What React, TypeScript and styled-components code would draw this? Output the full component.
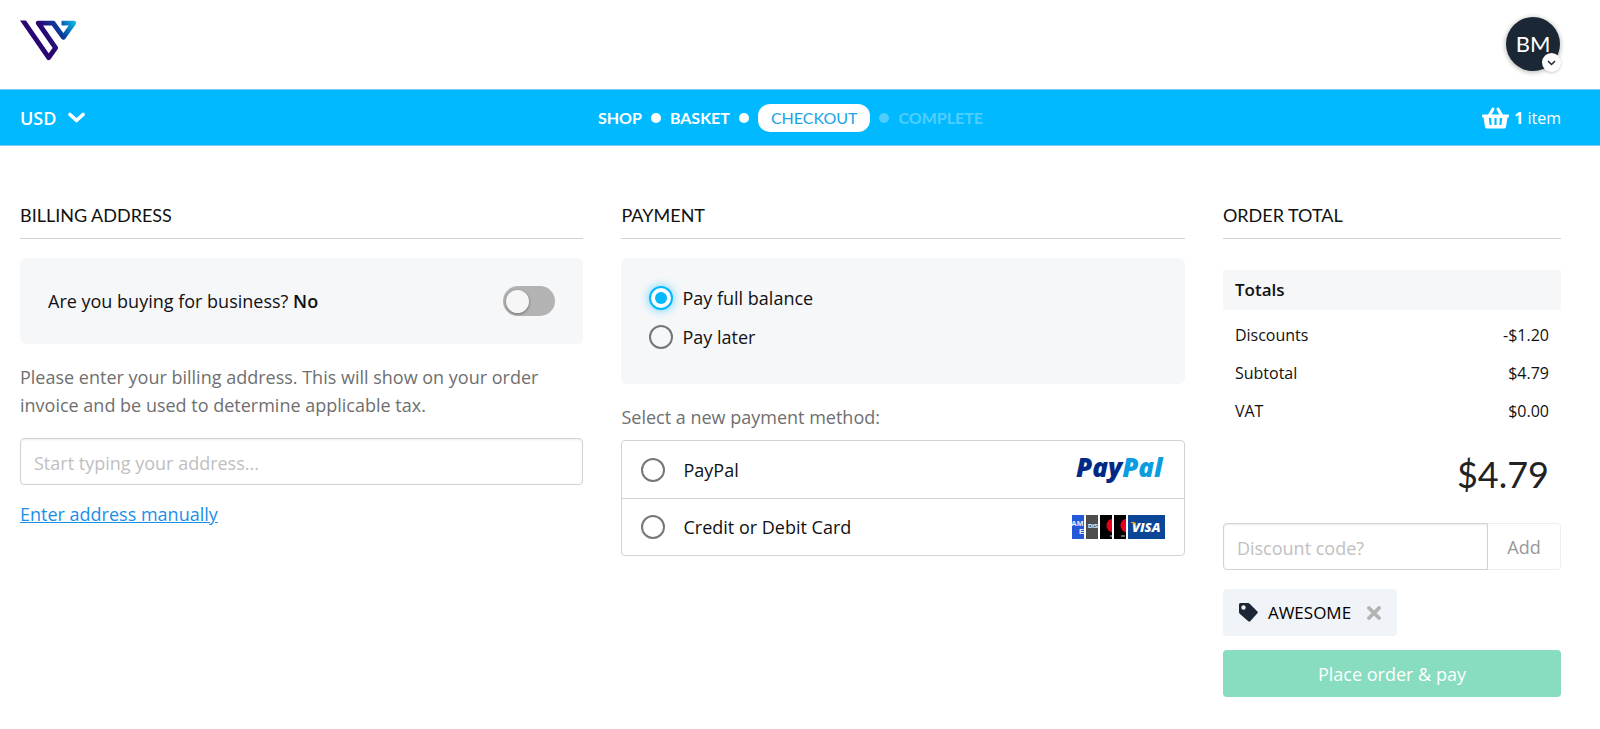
import React, { useState } from "react";
import styled, { createGlobalStyle } from "styled-components";

const display = '"Lato", "Open Sans", sans-serif';
const body = '"Open Sans", "Noto Sans", sans-serif';

const GlobalStyle = createGlobalStyle`
  *, *::before, *::after { box-sizing: border-box; }
  body { margin: 0; background: #fff; color: #111; font-family: ${body}; font-size: 18px; line-height: 28px; }
  button, input, select { font: inherit; color: inherit; margin: 0; }
`;

const Header = styled.header`
  display: flex;
  justify-content: space-between;
  align-items: flex-start;
  height: 89px;
  padding: 17px 40px 0 20px;
`;

const LogoLink = styled.a`
  display: block;
  padding-top: 2px;
  svg { display: block; }
`;

const Avatar = styled.button`
  position: relative;
  width: 54px;
  height: 54px;
  padding: 0;
  border: 0;
  border-radius: 50%;
  background: #1b2735;
  box-shadow: 0 1px 4px 1px rgba(0, 0, 0, 0.25);
  color: #fff;
  font-family: ${display};
  font-size: 22px;
  line-height: 54px;
`;

const AvatarBadge = styled.span`
  position: absolute;
  right: -1px;
  bottom: -1px;
  display: flex;
  align-items: center;
  justify-content: center;
  width: 19px;
  height: 19px;
  border-radius: 50%;
  background: #fff;
  box-shadow: 0 1px 3px rgba(0, 0, 0, 0.2);
`;

const Bar = styled.div`
  display: grid;
  grid-template-columns: 1fr auto 1fr;
  align-items: center;
  height: 57px;
  padding: 0 39px 0 20px;
  background: #00b9ff;
  border-top: 1px solid #7dcaf5;
  border-bottom: 1px solid #7dcaf5;
  color: #fff;
`;

const Currency = styled.label`
  display: flex;
  align-items: center;
  gap: 11px;
  select {
    appearance: none;
    padding: 0;
    border: 0;
    background: transparent;
    font-size: 18px;
    font-weight: 600;
    line-height: 28px;
  }
`;

const Steps = styled.ol`
  display: flex;
  align-items: center;
  margin: 0;
  padding: 0;
  list-style: none;
  font-family: ${display};
  font-size: 16px;
  font-weight: 700;
`;

const Step = styled.li<{ $muted?: boolean }>`
  display: flex;
  align-items: center;
  opacity: ${(p) => (p.$muted ? 0.3 : 1)};
  li + &::before {
    content: "";
    width: 10px;
    height: 10px;
    margin: 0 9px;
    border-radius: 50%;
    background: #fff;
  }
  a { color: inherit; text-decoration: none; }
`;

const CurrentStep = styled.span`
  padding: 0 13px;
  border-radius: 12px;
  background: #fff;
  color: #16a5e6;
  font-weight: 400;
`;

const Basket = styled.a`
  justify-self: end;
  display: flex;
  align-items: center;
  gap: 5px;
  color: #fff;
  font-size: 16px;
  font-weight: 500;
  text-decoration: none;
  b { font-weight: 700; }
`;

const Page = styled.main`
  display: grid;
  grid-template-columns: 5fr 5fr 3fr;
  column-gap: 38px;
  align-items: start;
  padding: 55px 39px 30px 20px;
`;

const Column = styled.section`
  display: flex;
  flex-direction: column;
  min-width: 0;
`;

const Heading = styled.h2`
  margin: 0 0 19px;
  padding-bottom: 9px;
  border-bottom: 1px solid #d3d3d3;
  font-family: ${display};
  font-size: 18px;
  font-weight: 400;
  line-height: 28px;
`;

const Panel = styled.div`
  padding: 28px;
  border-radius: 6px;
  background: #f6f7f9;
`;

const BusinessPanel = styled(Panel).attrs({ as: "label" })`
  display: flex;
  align-items: center;
  justify-content: space-between;
  height: 86px;
  b { font-weight: 600; }
`;

const Toggle = styled.input`
  appearance: none;
  display: flex;
  align-items: center;
  width: 52px;
  height: 30px;
  padding: 0 3px;
  border-radius: 15px;
  background: #b3b3b3;
  &::before {
    content: "";
    width: 23px;
    height: 23px;
    border-radius: 50%;
    background: #f6f6f6;
    box-shadow: 0 1px 3px rgba(0, 0, 0, 0.4);
  }
  &:checked { justify-content: flex-end; background: #00b9ff; }
`;

const Note = styled.p`
  margin: 19px 0 19px;
  color: #6f6f6f;
`;

const TextInput = styled.input`
  width: 100%;
  min-width: 0;
  height: 47px;
  padding: 2px 13px 0;
  border: 1px solid #d3d3d3;
  border-radius: 4px;
  background: #fff;
  box-shadow: inset 0 1px 2px rgba(0, 0, 0, 0.08);
  &::placeholder { color: #c0c0c0; opacity: 1; }
`;

const ManualLink = styled.a`
  align-self: flex-start;
  margin-top: 15px;
  color: #1a8fe8;
`;

const Radio = styled.input.attrs({ type: "radio" })`
  appearance: none;
  flex: none;
  display: grid;
  place-items: center;
  width: 24px;
  height: 24px;
  border: 2px solid #777;
  border-radius: 50%;
  background: transparent;
  &:checked {
    border-color: #00b9ff;
    background: #fff;
    box-shadow: 0 0 8px 1px #7fd8ff;
  }
  &:checked::before {
    content: "";
    width: 12px;
    height: 12px;
    border-radius: 50%;
    background: #00b9ff;
  }
`;

const BalanceOptions = styled(Panel)`
  display: flex;
  flex-direction: column;
  gap: 11px;
  height: 126px;
  padding-top: 26px;
`;

const BalanceOption = styled.label`
  display: flex;
  align-items: center;
  gap: 9px;
`;

const MethodNote = styled(Note)`
  margin-bottom: 9px;
`;

const Methods = styled.div`
  border: 1px solid #d3d3d3;
  border-radius: 4px;
`;

const Method = styled.label`
  display: flex;
  align-items: center;
  height: 57px;
  padding: 0 19px;
  & + & { border-top: 1px solid #d3d3d3; }
  svg { display: block; margin-left: auto; }
`;

const MethodName = styled.span`
  margin-left: 18px;
`;

const Totals = styled.table`
  width: 100%;
  margin-top: 12px;
  border-collapse: collapse;
  font-size: 16px;
  th, td { padding: 0 12px; font-weight: 400; text-align: left; height: 38px; }
  td { text-align: right; }
  thead th { height: 40px; background: #f6f7f9; font-size: 17px; font-weight: 600; }
  tbody tr:first-child > * { height: 44px; padding-top: 6px; }
`;

const GrandTotal = styled.p`
  margin: 22px 12px 27px 0;
  color: #222;
  font-family: ${display};
  font-size: 36px;
  line-height: 44px;
  text-align: right;
`;

const DiscountForm = styled.form`
  display: flex;
  ${TextInput} { flex: 1; border-radius: 4px 0 0 4px; }
`;

const AddButton = styled.button`
  width: 73px;
  height: 47px;
  padding: 0;
  border: 1px solid #eee;
  border-left: 0;
  border-radius: 0 4px 4px 0;
  background: #fff;
  color: #999;
`;

const Coupon = styled.div`
  display: flex;
  align-items: center;
  align-self: flex-start;
  gap: 10px;
  height: 47px;
  margin: 19px 0 14px;
  padding: 0 16px;
  border-radius: 4px;
  background: #f0f3f8;
  font-size: 17px;
  color: #000;
`;

const RemoveButton = styled.button`
  display: block;
  margin-left: 6px;
  padding: 0;
  border: 0;
  background: none;
  svg { display: block; }
`;

const OrderButton = styled.button`
  height: 47px;
  border: 0;
  border-radius: 4px;
  background: #88dcc0;
  color: #fff;
`;

const Logo = () => (
  <svg width="58" height="44" viewBox="0 0 58 44" fill="none" aria-hidden="true">
    <defs>
      <linearGradient id="brand" x1="8" y1="30" x2="56" y2="3" gradientUnits="userSpaceOnUse">
        <stop offset="0.4" stopColor="#2a0673" />
        <stop offset="0.68" stopColor="#093f9c" />
        <stop offset="1" stopColor="#0abfed" />
      </linearGradient>
      <clipPath id="brand-top"><rect y="1.600" width="58" height="42" /></clipPath>
    </defs>
    <path
      clipPath="url(#brand-top)"
      d="M1.600 -0.500 L28.700 38.600 L35.600 28.800 L18.300 4 H33 L43.400 18.200 L53.600 4 H41.500"
      stroke="url(#brand)"
      strokeWidth="4.900"
      strokeLinejoin="round"
    />
  </svg>
);

const Chevron = () => (
  <svg width="17" height="11" viewBox="0 0 17 11" fill="none" aria-hidden="true">
    <path d="M2 2.500 L8.500 8.500 L15 2.500" stroke="currentColor" strokeWidth="3.600" strokeLinecap="round" strokeLinejoin="round" />
  </svg>
);

const BasketIcon = () => (
  <svg width="27" height="22" viewBox="0 0 27 22" aria-hidden="true">
    <path d="M7 9 L11 2 M20 9 L16 2" stroke="#fff" strokeWidth="3" strokeLinecap="round" />
    <path
      fill="#fff"
      fillRule="evenodd"
      d="M1 7.500 H26 Q27 7.500 27 8.500 V9.500 Q27 10.500 26 10.500 H25.500 L24 20 Q23.600 21.500 22 21.500 H5 Q3.400 21.500 3 20 L1.500 10.500 H1 Q0 10.500 0 9.500 V8.500 Q0 7.500 1 7.500 Z M6.800 11 L7.600 18 H9.600 L9.200 11 Z M12.400 11 V18 H14.600 V11 Z M17.800 11 L17.400 18 H19.400 L20.200 11 Z"
    />
  </svg>
);

const PayPalLogo = () => (
  <svg width="94" height="42" viewBox="0 0 94 42" role="img" aria-label="PayPal">
    <text x="5" y="28" fontFamily="Open Sans" fontSize="26" fontWeight="800" fontStyle="italic" fill="#012a86">
      Pay<tspan fill="#0a9de0">Pal</tspan>
    </text>
  </svg>
);

const CardLogos = () => (
  <svg width="93" height="24" viewBox="0 0 93 24" role="img" aria-label="American Express, Discover, Mastercard, Maestro and Visa">
    <defs>
      <clipPath id="amex"><rect width="12" height="24" /></clipPath>
      <clipPath id="discover"><rect x="14" width="12" height="24" /></clipPath>
      <clipPath id="mastercard"><rect x="28" width="12" height="24" /></clipPath>
      <clipPath id="maestro"><rect x="42" width="12" height="24" /></clipPath>
    </defs>
    <g clipPath="url(#amex)" fontFamily="Liberation Sans" fontWeight="700" fontSize="8" fill="#e8f0ff">
      <rect width="12" height="24" fill="#2358d8" />
      <text x="-1" y="11">AM</text>
      <text x="7" y="19">E</text>
    </g>
    <g clipPath="url(#discover)">
      <rect x="14" width="12" height="24" fill="#4d4d4d" />
      <text x="16" y="13" fontFamily="Liberation Sans" fontWeight="700" fontSize="6" fill="#fff">DIS</text>
    </g>
    <g clipPath="url(#mastercard)">
      <rect x="28" width="12" height="24" fill="#000" />
      <circle cx="41.500" cy="10.500" r="7" fill="#eb001b" />
      <path d="M38 21h2" stroke="#ccc" />
    </g>
    <g clipPath="url(#maestro)">
      <rect x="42" width="12" height="24" fill="#000" />
      <circle cx="55.500" cy="10.500" r="7" fill="#eb001b" />
      <path d="M49 21h4" stroke="#ccc" />
    </g>
    <rect x="56" width="37" height="24" fill="#0b4595" />
    <text x="60" y="17" fontFamily="Open Sans" fontWeight="800" fontStyle="italic" fontSize="13" fill="#fff">VISA</text>
    <path d="M58.500 7 H62 Q63.500 7 63.700 8.500 L64.500 12 Q62.500 8.500 58.500 7.300 Z" fill="#f6a51b" />
  </svg>
);

const TagIcon = () => (
  <svg width="19" height="19" viewBox="0 0 19 19" aria-hidden="true">
    <path
      fill="#1b2735"
      fillRule="evenodd"
      d="M1.500 0 H9 Q10 0 10.700 0.700 L18.400 8.400 Q19.300 9.300 18.400 10.200 L11.200 18.200 Q10.200 19 9.300 18.200 L0.700 10.700 Q0 10 0 9 V1.500 Q0 0 1.500 0 Z M4.500 2.300 A2.200 2.200 0 1 0 4.500 6.700 A2.200 2.200 0 1 0 4.500 2.300 Z"
    />
  </svg>
);

const totals = [
  ["Discounts", "-$1.20"],
  ["Subtotal", "$4.79"],
  ["VAT", "$0.00"],
];

export default function App() {
  const [business, setBusiness] = useState(false);

  return (
    <>
      <GlobalStyle />
      <Header>
        <LogoLink href="#" aria-label="Home"><Logo /></LogoLink>
        <Avatar type="button">
          BM
          <AvatarBadge>
            <svg width="9" height="6" viewBox="0 0 9 6" fill="none" aria-hidden="true">
              <path d="M1 1 L4.500 4.500 L8 1" stroke="#1b2735" strokeWidth="1.500" />
            </svg>
          </AvatarBadge>
        </Avatar>
      </Header>
      <Bar>
        <Currency>
          <select aria-label="Currency" defaultValue="USD">
            <option>USD</option>
          </select>
          <Chevron />
        </Currency>
        <Steps>
          <Step><a href="#">SHOP</a></Step>
          <Step><a href="#">BASKET</a></Step>
          <Step><CurrentStep aria-current="step">CHECKOUT</CurrentStep></Step>
          <Step $muted>COMPLETE</Step>
        </Steps>
        <Basket href="#"><BasketIcon /><span><b>1</b> item</span></Basket>
      </Bar>
      <Page>
        <Column>
          <Heading>BILLING ADDRESS</Heading>
          <BusinessPanel>
            <span>Are you buying for business? <b>{business ? "Yes" : "No"}</b></span>
            <Toggle type="checkbox" role="switch" checked={business} onChange={(e) => setBusiness(e.target.checked)} />
          </BusinessPanel>
          <Note>
            Please enter your billing address. This will show on your order
            <br />
            invoice and be used to determine applicable tax.
          </Note>
          <TextInput type="text" aria-label="Billing address" placeholder="Start typing your address..." />
          <ManualLink href="#">Enter address manually</ManualLink>
        </Column>
        <Column>
          <Heading>PAYMENT</Heading>
          <BalanceOptions>
            <BalanceOption><Radio name="balance" defaultChecked />Pay full balance</BalanceOption>
            <BalanceOption><Radio name="balance" />Pay later</BalanceOption>
          </BalanceOptions>
          <MethodNote>Select a new payment method:</MethodNote>
          <Methods>
            <Method><Radio name="method" /><MethodName>PayPal</MethodName><PayPalLogo /></Method>
            <Method><Radio name="method" /><MethodName>Credit or Debit Card</MethodName><CardLogos /></Method>
          </Methods>
        </Column>
        <Column>
          <Heading>ORDER TOTAL</Heading>
          <Totals>
            <thead><tr><th colSpan={2}>Totals</th></tr></thead>
            <tbody>
              {totals.map(([name, value]) => (
                <tr key={name}><th scope="row">{name}</th><td>{value}</td></tr>
              ))}
            </tbody>
          </Totals>
          <GrandTotal>$4.79</GrandTotal>
          <DiscountForm onSubmit={(e) => e.preventDefault()}>
            <TextInput type="text" aria-label="Discount code" placeholder="Discount code?" />
            <AddButton type="submit">Add</AddButton>
          </DiscountForm>
          <Coupon>
            <TagIcon />
            AWESOME
            <RemoveButton type="button" aria-label="Remove discount">
              <svg width="14" height="14" viewBox="0 0 14 14" aria-hidden="true">
                <path d="M2 2 L12 12 M12 2 L2 12" stroke="#b3b3b3" strokeWidth="3.800" strokeLinecap="round" />
              </svg>
            </RemoveButton>
          </Coupon>
          <OrderButton type="button">Place order &amp; pay</OrderButton>
        </Column>
      </Page>
    </>
  );
}
